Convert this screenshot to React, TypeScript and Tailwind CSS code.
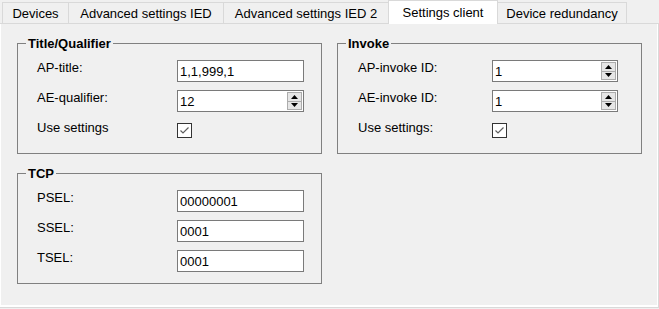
import React from 'react';

const font = "font-['Liberation_Sans',Arial,sans-serif]";

function Spinner() {
  return (
    <div className="flex flex-col w-[15px] my-px mr-px gap-0">
      {/* up / down halves of the numeric spinner */}
      <div className="flex-1 flex items-center justify-center border border-[#acacac] bg-[#e6e6e6]">
        <svg width="7" height="4" viewBox="0 0 7 4">
          <polygon points="3.5,0 7,4 0,4" fill="#000" />
        </svg>
      </div>
      <div className="flex-1 flex items-center justify-center border border-t-0 border-[#acacac] bg-[#e6e6e6]">
        <svg width="7" height="4" viewBox="0 0 7 4">
          <polygon points="0,0 7,0 3.5,4" fill="#000" />
        </svg>
      </div>
    </div>
  );
}

function TextBox({ value, width, spin }: { value: string; width: string; spin?: boolean }) {
  return (
    <div className={`${width} h-[22px] border border-[#7a7a7a] bg-white flex`}>
      <div className="flex-1 pl-[2px] pt-[3px] leading-[15px] text-[13px] text-black">{value}</div>
      {spin && <Spinner />}
    </div>
  );
}

function CheckBox() {
  return (
    <div className="w-[15px] h-[15px] mt-[3px] border border-[#333333] bg-white flex items-center justify-center">
      <svg width="13" height="13" viewBox="0 0 13 13">
        <polyline points="2.5,6.5 5,9 10.5,3.5" fill="none" stroke="#5f5f5f" strokeWidth="1.2" />
      </svg>
    </div>
  );
}

function Row({ label, labelW, children }: { label: string; labelW: string; children: React.ReactNode }) {
  return (
    <div className="flex h-[22px]">
      <div className={`${labelW} leading-[15px] text-[13px] text-black`}>{label}</div>
      {children}
    </div>
  );
}

function Group({ title, pad, children }: { title: string; pad: string; children: React.ReactNode }) {
  return (
    <fieldset className="border border-[#808080] w-[305px] min-w-0">
      <legend className="ml-[8px] px-[2px] font-bold text-[13px] leading-[15px] text-black">{title}</legend>
      <div className={`flex flex-col gap-[8px] pt-[9px] pb-[11px] ${pad}`}>{children}</div>
    </fieldset>
  );
}

const tabs = ['Devices', 'Advanced settings IED', 'Advanced settings IED 2', 'Settings client', 'Device redundancy'];
const tabW = ['w-[66px]', 'w-[155px]', 'w-[165px]', 'w-[110px]', 'w-[129px]'];

export default function App() {
  return (
    <div className={`${font} w-[659px] h-[309px] bg-[#f0f0f0] text-black overflow-hidden`}>
      {/* tab strip */}
      <div className="flex items-end h-[23px] pl-[2px]">
        {tabs.map((t, i) =>
          i === 3 ? (
            <div
              key={t}
              className={`${tabW[i]} h-[24px] -mb-px relative z-10 bg-white border-t border-x border-[#d9d9d9] flex items-center justify-center text-[13px] leading-[15px] pb-[1px]`}
            >
              {t}
            </div>
          ) : (
            <div
              key={t}
              className={`${tabW[i]} h-[21px] bg-[#f0f0f0] border-t border-[#d9d9d9] ${i === 4 ? 'border-r' : 'border-l'} flex items-center justify-center text-[13px] leading-[15px]`}
            >
              {t}
            </div>
          )
        )}
      </div>

      {/* tab page */}
      <div className="w-[659px] h-[285px] border-t border-r border-b border-[#d9d9d9] bg-white pl-px pr-px pb-[2px] flex">
        <div className="flex-1 bg-[#f0f0f0] pt-[12px] pl-[16px]">
          <div className="grid grid-cols-[305px_305px] gap-x-[15px] gap-y-[12px] items-start">
            <Group title="Title/Qualifier" pad="pl-[19px]">
              <Row label="AP-title:" labelW="w-[140px]">
                <TextBox value="1,1,999,1" width="w-[127px]" />
              </Row>
              <Row label="AE-qualifier:" labelW="w-[140px]">
                <TextBox value="12" width="w-[127px]" spin />
              </Row>
              <Row label="Use settings" labelW="w-[140px]">
                <CheckBox />
              </Row>
            </Group>

            <Group title="Invoke" pad="pl-[20px]">
              <Row label="AP-invoke ID:" labelW="w-[134px]">
                <TextBox value="1" width="w-[126px]" spin />
              </Row>
              <Row label="AE-invoke ID:" labelW="w-[134px]">
                <TextBox value="1" width="w-[126px]" spin />
              </Row>
              <Row label="Use settings:" labelW="w-[134px]">
                <CheckBox />
              </Row>
            </Group>

            <Group title="TCP" pad="pl-[19px]">
              <Row label="PSEL:" labelW="w-[140px]">
                <TextBox value="00000001" width="w-[127px]" />
              </Row>
              <Row label="SSEL:" labelW="w-[140px]">
                <TextBox value="0001" width="w-[127px]" />
              </Row>
              <Row label="TSEL:" labelW="w-[140px]">
                <TextBox value="0001" width="w-[127px]" />
              </Row>
            </Group>
          </div>
        </div>
      </div>
    </div>
  );
}
